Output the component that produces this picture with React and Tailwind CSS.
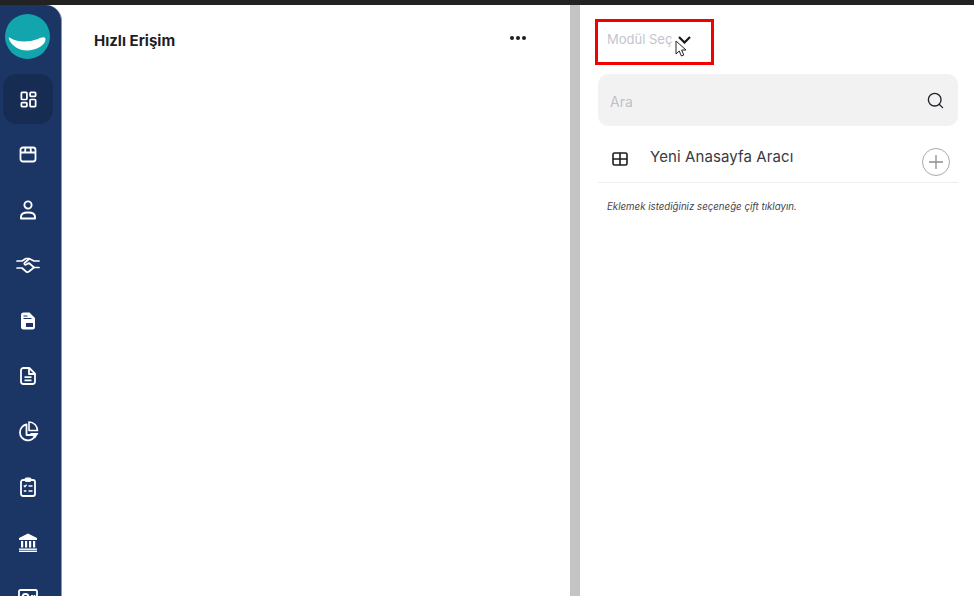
import { LayoutDashboard, Search } from "lucide-react";

const BoxIcon = () => (
  <svg width="18" height="18" viewBox="0 0 18 18" fill="none" stroke="white" strokeWidth="1.8" strokeLinejoin="round">
    <path d="M4 2.500h10a2.500 2.500 0 0 1 2.500 2.500v9a2.500 2.500 0 0 1-2.500 2.500H4A2.500 2.500 0 0 1 1.500 14V5A2.500 2.500 0 0 1 4 2.500Z" />
    <path d="M1.500 7.500h15M6.500 2.500 6 7.500M11.500 2.500l.5 5" />
  </svg>
);

const PersonIcon = () => (
  <svg width="18" height="20" viewBox="0 0 18 20" fill="none" stroke="white" strokeWidth="1.9" strokeLinejoin="round">
    <circle cx="9" cy="5" r="3.6" />
    <path d="M2 18.500v-1.700c0-2.700 3-4.300 7-4.300s7 1.600 7 4.300v1.700H2Z" />
  </svg>
);

const HandshakeIcon = () => (
  <svg width="24" height="20" viewBox="0 0 24 20" fill="none" stroke="white" strokeWidth="1.7" strokeLinecap="round" strokeLinejoin="round">
    <path d="M1 6h5l4-2.500h3l5 2.500h5" />
    <path d="M1 13h5l4 3.500c1 .8 2.200.8 3 0l5-4" />
    <path d="M13 4 8.500 8c-.8 1 .5 2.200 1.700 1.600L13 8l5 4.500h5" />
  </svg>
);

const FilledFileIcon = () => (
  <svg width="16" height="18" viewBox="0 0 16 18">
    <path d="M3.500.5h6L15 6v9a2.500 2.500 0 0 1-2.500 2.500h-9A2.500 2.500 0 0 1 1 15V3A2.500 2.500 0 0 1 3.500.5Z" fill="white" />
    <path d="M3.500 4h4M3.500 6.500h8" stroke="#1b3564" strokeWidth="1.2" />
    <rect x="6" y="11" width="7" height="4" fill="#1b3564" />
  </svg>
);

const FileLinesIcon = () => (
  <svg width="16" height="18" viewBox="0 0 16 18" fill="none" stroke="white" strokeWidth="1.8" strokeLinejoin="round">
    <path d="M3.500 1h5.800L15 6.700v7.800a2.500 2.500 0 0 1-2.500 2.500h-9A2.500 2.500 0 0 1 1 14.500v-11A2.500 2.500 0 0 1 3.500 1Z" />
    <path d="M9 1v6h6M4.500 10.200h7M4.500 13.400h7" />
  </svg>
);

const PieIcon = () => (
  <svg width="21" height="21" viewBox="0 0 21 21" fill="none">
    <path d="M8.500 3.500a8 8 0 1 0 9 10.500h-9V3.500Z" stroke="white" strokeWidth="1.8" strokeLinejoin="round" />
    <path d="M11 1a8.500 8.500 0 0 1 8.500 8.500H11V1Z" stroke="white" strokeWidth="1.6" strokeLinejoin="round" />
    <path d="M12 12h8.500l-3.500 5.500L12 12Z" fill="white" />
  </svg>
);

const ClipboardIcon = () => (
  <svg width="16" height="20" viewBox="0 0 16 20" fill="none" stroke="white" strokeLinejoin="round">
    <rect x="1" y="3" width="14" height="16" rx="2" strokeWidth="1.8" />
    <rect x="5" y="1" width="6" height="3.400" rx="1" fill="white" strokeWidth="1" />
    <path d="M3.800 8.500 5 9.700l1.600-2M8.500 9h4M3.800 14h2.600M8.500 14h4" strokeWidth="1.3" />
  </svg>
);

const BankIcon = () => (
  <svg width="20" height="19" viewBox="0 0 20 19" fill="white">
    <path d="M10 .5 19 5v2H1V5l9-4.500Z" />
    <rect x="3" y="8" width="2.200" height="6.500" />
    <rect x="7" y="8" width="2.200" height="6.500" />
    <rect x="11" y="8" width="2.200" height="6.500" />
    <rect x="15" y="8" width="2.200" height="6.500" />
    <rect x="1" y="15.500" width="18" height="1.400" />
    <rect x="1" y="17.600" width="18" height="1.400" />
  </svg>
);

const CardIcon = () => (
  <svg width="20" height="18" viewBox="0 0 20 18" fill="none" stroke="white" strokeWidth="1.8">
    <rect x="1" y="1" width="18" height="16" rx="1.5" />
    <circle cx="7.500" cy="8" r="3" />
    <path d="M14 6v6M16.500 6v6" />
  </svg>
);

const menuItems = [
  { icon: <LayoutDashboard size={19} strokeWidth={2.2} />, active: true },
  { icon: <BoxIcon /> },
  { icon: <PersonIcon /> },
  { icon: <HandshakeIcon /> },
  { icon: <FilledFileIcon /> },
  { icon: <FileLinesIcon /> },
  { icon: <PieIcon /> },
  { icon: <ClipboardIcon /> },
  { icon: <BankIcon /> },
  { icon: <CardIcon /> },
];

const Sidebar = () => (
  <aside className="w-[62px] h-full shrink-0 bg-[#1b3564] rounded-tr-[16px] border-r border-[#8d97a8] pt-[9px] overflow-hidden">
    <div className="ml-[5px] w-[45px] h-[45px] rounded-full bg-[#12a5ad]">
      <svg width="45" height="45" viewBox="0 0 45 45">
        <path d="M4.500 23.500C11 28 22 29 33 25c3-1.500 7-3 7.500 0 .5 6-9.500 11.500-18.500 11.500C14 36.500 7 32 4 25.500c-.5-1.500 0-2.500.5-2Z" fill="white" />
      </svg>
    </div>
    <div className="mt-[15px] ml-[3px] w-[50px] flex flex-col gap-[5.4px]">
      {menuItems.map((item, i) => (
        <div
          key={i}
          className={`h-[50px] shrink-0 flex items-center justify-center text-white rounded-[14px] ${item.active ? "bg-[#172c52]" : ""}`}
        >
          {item.icon}
        </div>
      ))}
    </div>
  </aside>
);

const App = () => {
  return (
    <div className="relative w-[974px] h-[596px] overflow-hidden bg-white font-['Inter',sans-serif]">
      <div className="h-[5px] bg-[#222222]"></div>
      <div className="flex h-[591px]">
        <Sidebar />
        <main className="w-[508px] shrink-0 pl-[32px] pr-[44px] pt-[25px] flex justify-between items-start">
          <h1 className="text-[15px] mt-[1px] leading-5 font-bold text-[#1d1d22]">Hızlı Erişim</h1>
          <div className="flex gap-[2px] mt-[6px]">
            <span className="w-[4px] h-[4px] rounded-full bg-[#1d1d22]"></span>
            <span className="w-[4px] h-[4px] rounded-full bg-[#1d1d22]"></span>
            <span className="w-[4px] h-[4px] rounded-full bg-[#1d1d22]"></span>
          </div>
        </main>
        <div className="w-[10px] shrink-0 bg-[#c4c4c4]"></div>
        <section className="flex-1 pl-[18px] pr-[16px]">
          <div className="pt-[14px] -ml-[3px] w-[119px]">
            <div className="h-[46px] border-[3px] border-[#f50000] flex items-center pl-[9px] pb-[4px] gap-[6px]">
              <span className="text-[13px] text-[#c3c5ce]">Modül Seç</span>
              <svg width="13" height="8" viewBox="0 0 13 8" fill="none" stroke="#17171c" strokeWidth="2.2">
                <path d="m1 1 5.500 5.500L12 1" />
              </svg>
            </div>
          </div>
          <div className="mt-[9px] h-[52px] rounded-[10px] bg-[#f2f2f3] flex items-center justify-between pl-[12px] pr-[13px]">
            <span className="text-[14px] pt-[2px] text-[#bfc1c8]">Ara</span>
            <Search size={19} strokeWidth={1.7} className="text-[#222228]" />
          </div>
          <div className="h-[57px] border-b border-[#eeeeee] flex items-start pl-[14px] pr-[8px]">
            <svg className="mt-[26px]" width="16" height="14" viewBox="0 0 16 14" fill="none" stroke="#1d1d22" strokeWidth="1.6">
              <rect x="1" y="1" width="14" height="12" rx="1.5" />
              <path d="M1 7h14M8 1v12" />
            </svg>
            <span className="ml-[22px] mt-[21px] text-[15px] leading-5 tracking-[0.1px] text-[#3a3a40]">Yeni Anasayfa Aracı</span>
            <div className="ml-auto mt-[22px] w-[28px] h-[28px] rounded-full border border-[#a9a9ad] flex items-center justify-center">
              <svg width="14" height="14" viewBox="0 0 14 14" stroke="#8f8f94" strokeWidth="1.3">
                <path d="M7 0v14M0 7h14" />
              </svg>
            </div>
          </div>
          <p className="mt-[17px] ml-[9px] text-[9.7px] leading-[14px] italic text-[#45454b]">Eklemek istediğiniz seçeneğe çift tıklayın.</p>
        </section>
      </div>
      {/* mouse cursor over the dropdown */}
      <svg className="absolute left-[675px] top-[40px]" width="12" height="18" viewBox="0 0 12 18">
        <path d="M1 1v13l3.200-3 2.200 5 2.400-1-2.200-5H11L1 1Z" fill="white" stroke="#222" strokeWidth="1" />
      </svg>
    </div>
  );
};

export default App;
